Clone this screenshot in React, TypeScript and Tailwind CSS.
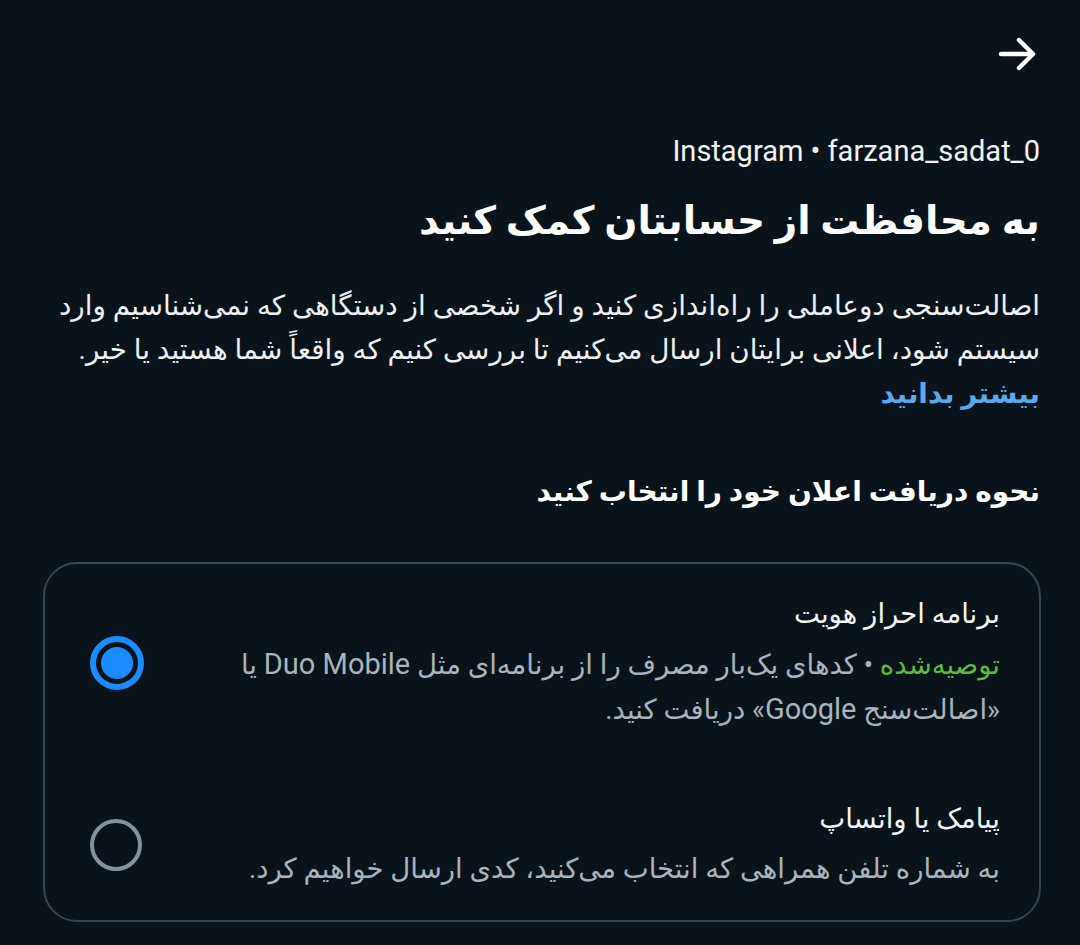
import React from "react"

const font = { fontFamily: 'Roboto, "DejaVu Sans", sans-serif' }

interface Option {
  title: string
  desc: React.ReactNode
  selected: boolean
}

const options: Option[] = [
  {
    title: "برنامه احراز هویت",
    selected: true,
    desc: (
      <>
        <span className="text-[#5dbb3f]">توصیه‌شده</span> • کدهای یک‌بار مصرف را از برنامه‌ای مثل{" "}
        <span className="text-[29px]">Duo Mobile</span> یا
        <br />
        «اصالت‌سنج <span className="text-[29px]">Google</span>» دریافت کنید.
      </>
    ),
  },
  {
    title: "پیامک یا واتساپ",
    selected: false,
    desc: "به شماره تلفن همراهی که انتخاب می‌کنید، کدی ارسال خواهیم کرد.",
  },
]

const Radio = ({ on }: { on: boolean }) =>
  on ? (
    <div className="w-[54px] h-[54px] rounded-full border-[6px] border-[#1a8cff] flex items-center justify-center shrink-0">
      <div className="w-[32px] h-[32px] rounded-full bg-[#1a8cff]" />
    </div>
  ) : (
    <div className="w-[52px] h-[52px] rounded-full border-[4px] border-[#85919c] shrink-0" />
  )

export default function App() {
  return (
    <div dir="rtl" style={font} className="w-[1080px] h-[945px] overflow-hidden bg-[#0b131a] text-white px-[40px]">
      <div className="flex justify-start pt-[30px]">
        <svg width="48" height="48" viewBox="0 0 24 24" fill="none" stroke="white" strokeWidth="2.2" strokeLinecap="round" strokeLinejoin="round" className="-mr-[1px]">
          <path d="M4 12h15" />
          <path d="M13 5l7 7-7 7" />
        </svg>
      </div>
      <div dir="ltr" className="text-right text-[29px] mt-[56px] leading-[34px] text-[#f2f4f5]">
        Instagram • farzana_sadat_0
      </div>
      <h1 className="text-[39px] font-bold mt-[27px] leading-[52px]">به محافظت از حسابتان کمک کنید</h1>
      <p className="text-[27.8px] leading-[44px] mt-[37px] text-[#eef1f3] whitespace-nowrap">
        اصالت‌سنجی دوعاملی را راه‌اندازی کنید و اگر شخصی از دستگاهی که نمی‌شناسیم وارد
        <br />
        سیستم شود، اعلانی برایتان ارسال می‌کنیم تا بررسی کنیم که واقعاً شما هستید یا خیر.
      </p>
      <div className="text-[27.8px] leading-[44px] font-bold text-[#5aa8ee]">بیشتر بدانید</div>
      <h2 className="text-[28px] font-bold mt-[56px] leading-[40px]">نحوه دریافت اعلان خود را انتخاب کنید</h2>
      <div className="mt-[50px] ml-[3px] -mr-[1px] border-2 border-[#36454f] rounded-[34px] pr-[39px] pl-[45px] pt-[30px] pb-[29px] flex flex-col gap-[67px]">
        {options.map((o, i) => (
          <div key={i} className="flex items-center gap-[24px]">
            <div className="flex-1">
              <div className="text-[27.5px] leading-[40px] text-[#f2f4f5]">{o.title}</div>
              <div className="text-[27.5px] leading-[44px] mt-[8px] text-[#a9b4bd] whitespace-nowrap">{o.desc}</div>
            </div>
            <Radio on={o.selected} />
          </div>
        ))}
      </div>
    </div>
  )
}
